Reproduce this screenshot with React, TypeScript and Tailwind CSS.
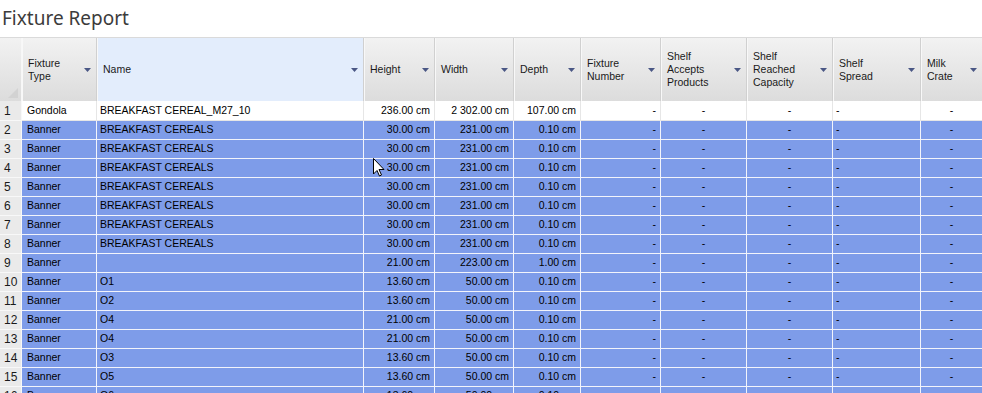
import React from "react";

type Align = "left" | "right" | "center";
const cols: { label: string[]; w: number; align: Align; pl: number }[] = [
  { label: ["Fixture", "Type"], w: 75, align: "left", pl: 5 },
  { label: ["Name"], w: 267, align: "left", pl: 3 },
  { label: ["Height"], w: 71, align: "right", pl: 0 },
  { label: ["Width"], w: 79, align: "right", pl: 0 },
  { label: ["Depth"], w: 67, align: "right", pl: 0 },
  { label: ["Fixture", "Number"], w: 80, align: "right", pl: 0 },
  { label: ["Shelf", "Accepts", "Products"], w: 86, align: "center", pl: 0 },
  { label: ["Shelf", "Reached", "Capacity"], w: 86, align: "center", pl: 0 },
  { label: ["Shelf", "Spread"], w: 88, align: "left", pl: 3 },
  { label: ["Milk", "Crate"], w: 62, align: "center", pl: 0 },
];

const rows: string[][] = [
  ["Gondola", "BREAKFAST CEREAL_M27_10", "236.00 cm", "2 302.00 cm", "107.00 cm"],
  ["Banner", "BREAKFAST CEREALS", "30.00 cm", "231.00 cm", "0.10 cm"],
  ["Banner", "BREAKFAST CEREALS", "30.00 cm", "231.00 cm", "0.10 cm"],
  ["Banner", "BREAKFAST CEREALS", "30.00 cm", "231.00 cm", "0.10 cm"],
  ["Banner", "BREAKFAST CEREALS", "30.00 cm", "231.00 cm", "0.10 cm"],
  ["Banner", "BREAKFAST CEREALS", "30.00 cm", "231.00 cm", "0.10 cm"],
  ["Banner", "BREAKFAST CEREALS", "30.00 cm", "231.00 cm", "0.10 cm"],
  ["Banner", "BREAKFAST CEREALS", "30.00 cm", "231.00 cm", "0.10 cm"],
  ["Banner", "", "21.00 cm", "223.00 cm", "1.00 cm"],
  ["Banner", "O1", "13.60 cm", "50.00 cm", "0.10 cm"],
  ["Banner", "O2", "13.60 cm", "50.00 cm", "0.10 cm"],
  ["Banner", "O4", "21.00 cm", "50.00 cm", "0.10 cm"],
  ["Banner", "O4", "21.00 cm", "50.00 cm", "0.10 cm"],
  ["Banner", "O3", "13.60 cm", "50.00 cm", "0.10 cm"],
  ["Banner", "O5", "13.60 cm", "50.00 cm", "0.10 cm"],
  ["Banner", "O6", "13.60 cm", "50.00 cm", "0.10 cm"],
];

const Arrow = () => (
  <svg width="7" height="4" viewBox="0 0 7 4" className="shrink-0">
    <path d="M0 0 H7 L3.5 4 Z" fill="#4a5785" />
  </svg>
);

const alignCls = (a: Align) =>
  a === "left" ? "justify-start" : a === "right" ? "justify-end pr-[4px]" : "justify-center";

export default function App() {
  return (
    <div
      className="relative w-[982px] h-[393px] overflow-hidden bg-white text-black"
      style={{ fontFamily: '"Liberation Sans", Arial, sans-serif' }}
    >
      <div
        className="h-[37px] pl-[2px] pt-[5px] text-[19px] leading-[26px] text-[#3c3c3c]"
        style={{ fontFamily: '"Noto Sans", "Open Sans", sans-serif' }}
      >
        Fixture Report
      </div>

      {/* header */}
      <div className="flex h-[64px] border-t border-[#dadada] text-[10.5px] leading-[13px] text-[#1a1a1a]">
        <div className="relative w-[22px] shrink-0 bg-gradient-to-b from-[#f2f2f2] to-[#dcdcdc] border-r border-[#f7f7f7]">
          <svg width="10" height="10" viewBox="0 0 10 10" className="absolute right-[3px] bottom-[3px]">
            <path d="M10 0 V10 H0 Z" fill="#d2d2d2" />
          </svg>
        </div>
        {cols.map((c, i) => (
          <div
            key={i}
            className={
              "flex shrink-0 items-center justify-between pl-[5px] pr-[5px] border-l border-[#f8f8f8] border-r border-r-[#d0d0d0] " +
              (i === 1 ? "bg-[#e3edfc]" : "bg-gradient-to-b from-[#f2f2f2] to-[#dcdcdc]")
            }
            style={{ width: c.w }}
          >
            <div className="flex flex-col">
              {c.label.map((l, j) => (
                <span key={j}>{l}</span>
              ))}
            </div>
            <Arrow />
          </div>
        ))}
      </div>

      {/* rows */}
      {rows.map((r, ri) => {
        const sel = ri > 0;
        const cells = [...r, "-", "-", "-", "-", "-"];
        return (
          <div key={ri} className={"flex text-[10.5px] " + (ri === 0 ? "h-[20px]" : "h-[19px]")}>
            <div className="w-[22px] shrink-0 flex items-center pl-[4px] bg-[#eaeaea] border-b border-r border-[#f8f8f8] text-[12px] text-[#1a1a1a]">
              {ri + 1}
            </div>
            {cols.map((c, ci) => (
              <div
                key={ci}
                className={
                  "flex shrink-0 items-center overflow-hidden whitespace-nowrap border-r border-b " +
                  (sel ? "bg-[#7e9ce9] border-[#f2f4fb] " : "bg-white border-[#e6e6e6] ") +
                  alignCls(c.align)
                }
                style={{ width: c.w, paddingLeft: c.pl }}
              >
                {cells[ci]}
              </div>
            ))}
          </div>
        );
      })}

      {/* mouse cursor */}
      <svg
        width="12"
        height="19"
        viewBox="0 0 12 19"
        className="absolute left-[373px] top-[158px]"
      >
        <path
          d="M0.5 0.5 V16 L4 12.5 L6.5 18 L8.5 17 L6 11.5 H11 Z"
          fill="#ffffff"
          stroke="#000000"
          strokeWidth="1"
          strokeLinejoin="miter"
        />
      </svg>
    </div>
  );
}
